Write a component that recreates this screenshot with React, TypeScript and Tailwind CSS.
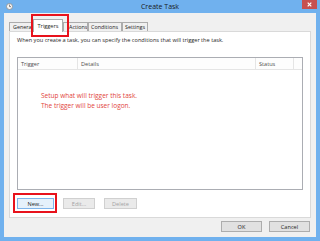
const font = { fontFamily: '"Open Sans", "Liberation Sans", sans-serif' };

const Tab = ({ label, w, active, pad }: { label: string; w: string; active?: boolean; pad?: string }) =>
  active ? (
    <div
      className={`relative z-10 -ml-[2px] -mb-px flex h-[13px] ${w} items-start justify-center border border-b-0 border-[#acacac] bg-white pt-[2px] text-[5.6px] leading-[8px] text-[#1e1e1e]`}
    >
      {label}
    </div>
  ) : (
    <div
      className={`flex h-[9px] ${w} items-center ${pad ?? "pl-[2px]"} justify-start overflow-hidden whitespace-nowrap border border-b-0 border-[#acacac] bg-[#f0f0f0] text-[5.4px] leading-[8px] text-[#1e1e1e]`}
    >
      {label}
    </div>
  );

export default function App() {
  return (
    <div className="flex h-[241px] w-[320px] flex-col bg-[#70b1ee]" style={font}>
      {/* title bar */}
      <div className="grid h-[13px] grid-cols-[1fr_auto_1fr] items-center">
        <div className="pl-[6px]">
          <svg width="7" height="7" viewBox="0 0 7 7">
            <circle cx="3.5" cy="3.5" r="3" fill="#f6f6f6" stroke="#8c8c8c" strokeWidth="0.8" />
            <path d="M3.5 1.6 V3.6 H5" fill="none" stroke="#555" strokeWidth="0.7" />
          </svg>
        </div>
        <div className="text-[7px] leading-[9px] text-[#1a1a1a]">Create Task</div>
        <div className="flex justify-end self-start pr-[3px]">
          <div className="flex h-[9px] w-[15px] items-center justify-center bg-[#c75050]">
            <svg width="5" height="5" viewBox="0 0 5 5">
              <path d="M0.7 0.7 L4.3 4.3 M4.3 0.7 L0.7 4.3" stroke="#fff" strokeWidth="1.2" />
            </svg>
          </div>
        </div>
      </div>

      {/* client area */}
      <div className="relative mx-[4px] flex h-[224px] flex-col bg-[#f0f0f0]">
        <div className="flex h-[18px] items-end pl-[5px]">
          <Tab label="General" w="w-[26px]" pad="pl-[3px]" />
          <Tab label="Triggers" w="w-[30px]" active />
          <Tab label="Actions" w="w-[25px]" pad="pl-[5px]" />
          <Tab label="Conditions" w="w-[34px]" />
          <Tab label="Settings" w="w-[26px]" />
        </div>

        <div className="mx-[5px] flex h-[187px] flex-col border border-[#d9d9d9] bg-white px-[7px] pt-[5px]">
          <p className="whitespace-nowrap text-[5.6px] leading-[7px] text-[#1e1e1e]">
            When you create a task, you can specify the conditions that will trigger the task.
          </p>

          <div className="mt-[13px] flex h-[133px] flex-col border border-[#abadb3] bg-white">
            <div className="flex h-[12px] items-center border-b border-[#e5e5e5] bg-[#fdfdfd] text-[5.6px] text-[#4d4d4d]">
              <div className="h-full w-[60px] border-r border-[#e5e5e5] pl-[3px] leading-[12px]">Trigger</div>
              <div className="h-full w-[178px] border-r border-[#e5e5e5] pl-[3px] leading-[12px]">Details</div>
              <div className="h-full w-[38px] border-r border-[#e5e5e5] pl-[3px] leading-[12px]">Status</div>
            </div>
            <div className="pl-[23px] pt-[21px] text-[6.5px] leading-[10px] text-[#e2453c]">
              <p>Setup what will trigger this task.</p>
              <p>The trigger will be user logon.</p>
            </div>
          </div>

          <div className="mt-[8px] flex gap-[9px] text-[5.6px] leading-[8px]">
            <div className="relative flex h-[11px] w-[37px] items-center justify-center border border-[#7eb4ea] bg-[#e5f1fb] text-[#1e1e1e]">
              New...
              <div className="absolute -left-[5px] -top-[6px] h-[20px] w-[44px] border-2 border-[#e8121c]" />
            </div>
            <div className="flex h-[11px] w-[32px] items-center justify-center border border-[#d0d0d0] bg-[#eaeaea] text-[#a3a3a3]">
              Edit...
            </div>
            <div className="flex h-[11px] w-[33px] items-center justify-center border border-[#d0d0d0] bg-[#eaeaea] text-[#a3a3a3]">
              Delete
            </div>
          </div>
        </div>

        <div className="mt-[3px] flex justify-end gap-[7px] pr-[6px] text-[5.6px] leading-[8px] text-[#1e1e1e]">
          <div className="flex h-[11px] w-[41px] items-center justify-center border border-[#adadad] bg-[#e1e1e1]">OK</div>
          <div className="flex h-[11px] w-[41px] items-center justify-center border border-[#adadad] bg-[#e1e1e1]">Cancel</div>
        </div>

        {/* red annotation box around Triggers tab */}
        <div className="absolute left-[27px] top-[1px] h-[23px] w-[38px] border-2 border-[#e8121c]" />
      </div>
    </div>
  );
}
